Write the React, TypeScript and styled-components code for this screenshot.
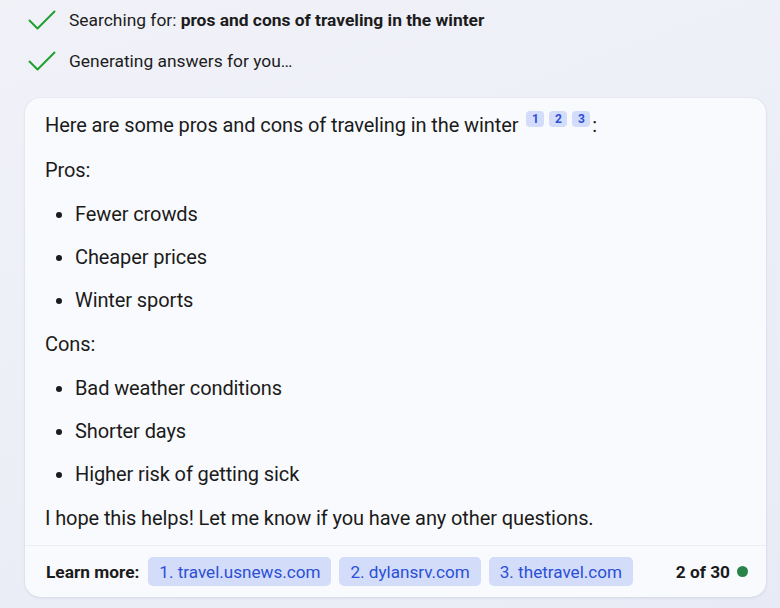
import React from "react";
import styled, { createGlobalStyle } from "styled-components";

const Global = createGlobalStyle`
  html, body { margin: 0; padding: 0; }
  body {
    background: linear-gradient(160deg, #f1f2f8 0%, #eceef7 60%, #e8ebf5 100%);
    font-family: Roboto, "Noto Sans", Arial, sans-serif;
    color: #1b1b1b;
    width: 780px;
    height: 608px;
    overflow: hidden;
  }
`;

const Page = styled.div`
  display: flex;
  flex-direction: column;
  padding: 0 14px 0 25px;
`;

const Status = styled.div`
  display: flex;
  flex-direction: column;
  gap: 13px;
  padding: 6px 0 0 3px;
  margin-bottom: 23px;
`;

const StatusRow = styled.div`
  display: flex;
  align-items: center;
  gap: 13px;
  height: 28px;
  font-size: 17.4px;
  color: #1c1c1c;
  b { font-weight: 700; }
`;

const Card = styled.div`
  background: #f9fafd;
  border-radius: 15px;
  box-shadow: 0 1px 3px rgba(40, 50, 90, 0.10), 0 0 1px rgba(40, 50, 90, 0.12);
  display: flex;
  flex-direction: column;
  width: 741px;
`;

const Body = styled.div`
  padding: 13px 20px 13px 20px;
  display: flex;
  flex-direction: column;
  gap: 17px;
  font-size: 20px;
  letter-spacing: -0.1px;
`;

const Para = styled.p`
  margin: 0;
  line-height: 28px;
`;

const List = styled.ul`
  margin: 0;
  padding-left: 30px;
  display: flex;
  flex-direction: column;
  gap: 17px;
`;

const Item = styled.li`
  line-height: 26px;
`;

const Cites = styled.span`
  display: inline-flex;
  gap: 5px;
  margin-left: 8px;
  margin-right: 2px;
  vertical-align: 9px;
  letter-spacing: 0;
`;

const Cite = styled.span`
  display: inline-flex;
  align-items: center;
  justify-content: center;
  width: 18px;
  height: 16px;
  border-radius: 4px;
  background: #d3dcfa;
  color: #2b4fd6;
  font-size: 12px;
  font-weight: 700;
  line-height: 1;
`;

const Footer = styled.div`
  border-top: 1px solid #ebedf3;
  display: flex;
  align-items: center;
  padding: 11px 18px 11px 21px;
  font-size: 17.3px;
`;

const LearnLabel = styled.span`
  font-weight: 700;
  margin-right: 9px;
`;

const Chips = styled.div`
  display: flex;
  gap: 8px;
`;

const Chip = styled.a`
  display: inline-flex;
  align-items: center;
  height: 29px;
  padding: 0 11px;
  border-radius: 5px;
  background: #d3ddfa;
  color: #2b4fd6;
  font-size: 17.1px;
  text-decoration: none;
`;

const Count = styled.div`
  margin-left: auto;
  display: flex;
  align-items: center;
  gap: 7px;
  font-weight: 700;
`;

const Dot = styled.span`
  width: 11px;
  height: 11px;
  border-radius: 50%;
  background: #2a8449;
`;

const Check = () => (
  <svg width="28" height="28" viewBox="0 0 28 28" fill="none">
    <path d="M1.5 14.5 L9.5 22.5 L26.5 5.5" stroke="#1fa02f" strokeWidth="2" strokeLinecap="round" strokeLinejoin="round" />
  </svg>
);

export default function App() {
  return (
    <>
      <Global />
      <Page>
        <Status>
          <StatusRow>
            <Check />
            <span>
              Searching for: <b>pros and cons of traveling in the winter</b>
            </span>
          </StatusRow>
          <StatusRow>
            <Check />
            <span>Generating answers for you…</span>
          </StatusRow>
        </Status>
        <Card>
          <Body>
            <Para>
              Here are some pros and cons of traveling in the winter
              <Cites>
                <Cite>1</Cite>
                <Cite>2</Cite>
                <Cite>3</Cite>
              </Cites>
              :
            </Para>
            <Para>Pros:</Para>
            <List>
              <Item>Fewer crowds</Item>
              <Item>Cheaper prices</Item>
              <Item>Winter sports</Item>
            </List>
            <Para>Cons:</Para>
            <List>
              <Item>Bad weather conditions</Item>
              <Item>Shorter days</Item>
              <Item>Higher risk of getting sick</Item>
            </List>
            <Para>I hope this helps! Let me know if you have any other questions.</Para>
          </Body>
          <Footer>
            <LearnLabel>Learn more:</LearnLabel>
            <Chips>
              <Chip>1. travel.usnews.com</Chip>
              <Chip>2. dylansrv.com</Chip>
              <Chip>3. thetravel.com</Chip>
            </Chips>
            <Count>
              2 of 30
              <Dot />
            </Count>
          </Footer>
        </Card>
      </Page>
    </>
  );
}
